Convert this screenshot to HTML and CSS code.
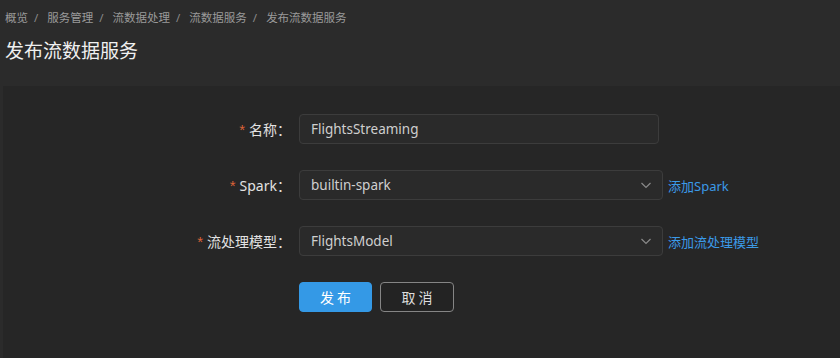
FILE: index.html
```html
<!DOCTYPE html>
<html lang="zh-CN">
<head>
    <meta charset="UTF-8">
    <title>发布流数据服务</title>
    <link rel="stylesheet" href="styles.css">
</head>
<body>
    <div class="header">
        <div class="breadcrumb">
            <span>概览</span><span class="sep">/</span>
            <span>服务管理</span><span class="sep">/</span>
            <span>流数据处理</span><span class="sep">/</span>
            <span>流数据服务</span><span class="sep">/</span>
            <span>发布流数据服务</span>
        </div>
        <h2 class="title">发布流数据服务</h2>
    </div>
    <div class="panel">
        <form class="form">
            <div class="form-row">
                <label class="label"><span class="req">*</span>名称：</label>
                <div class="input">FlightsStreaming</div>
            </div>
            <div class="form-row">
                <label class="label"><span class="req">*</span>Spark：</label>
                <div class="select">
                    <span>builtin-spark</span>
                    <svg class="arrow" width="12" height="12" viewBox="0 0 12 12"><path d="M1.5 4 L6 8.5 L10.5 4" fill="none" stroke="#8a8a8a" stroke-width="1.2"/></svg>
                </div>
                <a class="link" href="#">添加Spark</a>
            </div>
            <div class="form-row">
                <label class="label"><span class="req">*</span>流处理模型：</label>
                <div class="select">
                    <span>FlightsModel</span>
                    <svg class="arrow" width="12" height="12" viewBox="0 0 12 12"><path d="M1.5 4 L6 8.5 L10.5 4" fill="none" stroke="#8a8a8a" stroke-width="1.2"/></svg>
                </div>
                <a class="link" href="#">添加流处理模型</a>
            </div>
            <div class="form-row actions">
                <button type="button" class="btn primary">发 布</button>
                <button type="button" class="btn">取 消</button>
            </div>
        </form>
    </div>
</body>
</html>
```

FILE: styles.css
```css
body {
    margin: 0;
    background: #2b2b2b;
    font-family: "Noto Sans", "Noto Sans CJK SC", sans-serif;
    color: #ddd;
    height: 358px;
    overflow: hidden;
    display: flex;
    flex-direction: column;
}

.header {
    padding: 10px 5px 0;
    height: 86px;
    box-sizing: border-box;
}

.breadcrumb {
    font-size: 11.5px;
    color: #9a9a9a;
    line-height: 16px;
}

.breadcrumb .sep {
    margin: 0 6px;
    color: #8a8a8a;
}

.title {
    margin: 11px 0 0;
    font-size: 19px;
    font-weight: normal;
    color: #f0f0f0;
    line-height: 28px;
}

.panel {
    flex: 1;
    margin-left: 3px;
    background: #262626;
    padding-top: 28px;
}

.form {
    display: flex;
    flex-direction: column;
    gap: 26px;
}

.form-row {
    display: flex;
    align-items: center;
}

.label {
    width: 288px;
    padding-right: 8px;
    text-align: right;
    font-size: 14px;
    color: #e2e2e2;
}

.req {
    color: #dc6238;
    margin-right: 4px;
    font-size: 15px;
    font-family: "Liberation Sans", sans-serif;
}

.input, .select {
    box-sizing: border-box;
    height: 30px;
    border: 1px solid #3c3c3c;
    border-radius: 4px;
    background: #2a2a2a;
    font-size: 13.5px;
    color: #cfcfcf;
    padding: 0 11px;
    display: flex;
    align-items: center;
}

.input {
    width: 360px;
}

.select {
    width: 364px;
    justify-content: space-between;
    padding-right: 10px;
}

.link {
    margin-left: 5px;
    font-size: 13px;
    color: #3b9ae8;
    text-decoration: none;
}

.actions {
    padding-left: 296px;
    gap: 8px;
}

.btn {
    width: 74px;
    height: 30px;
    border-radius: 4px;
    border: 1px solid #858585;
    background: #232323;
    color: #ddd;
    font-size: 14px;
    font-family: "Noto Sans CJK SC", sans-serif;
    cursor: pointer;
}

.btn.primary {
    width: 73px;
    background: #3499e6;
    border-color: #3499e6;
    color: #fff;
}
```
